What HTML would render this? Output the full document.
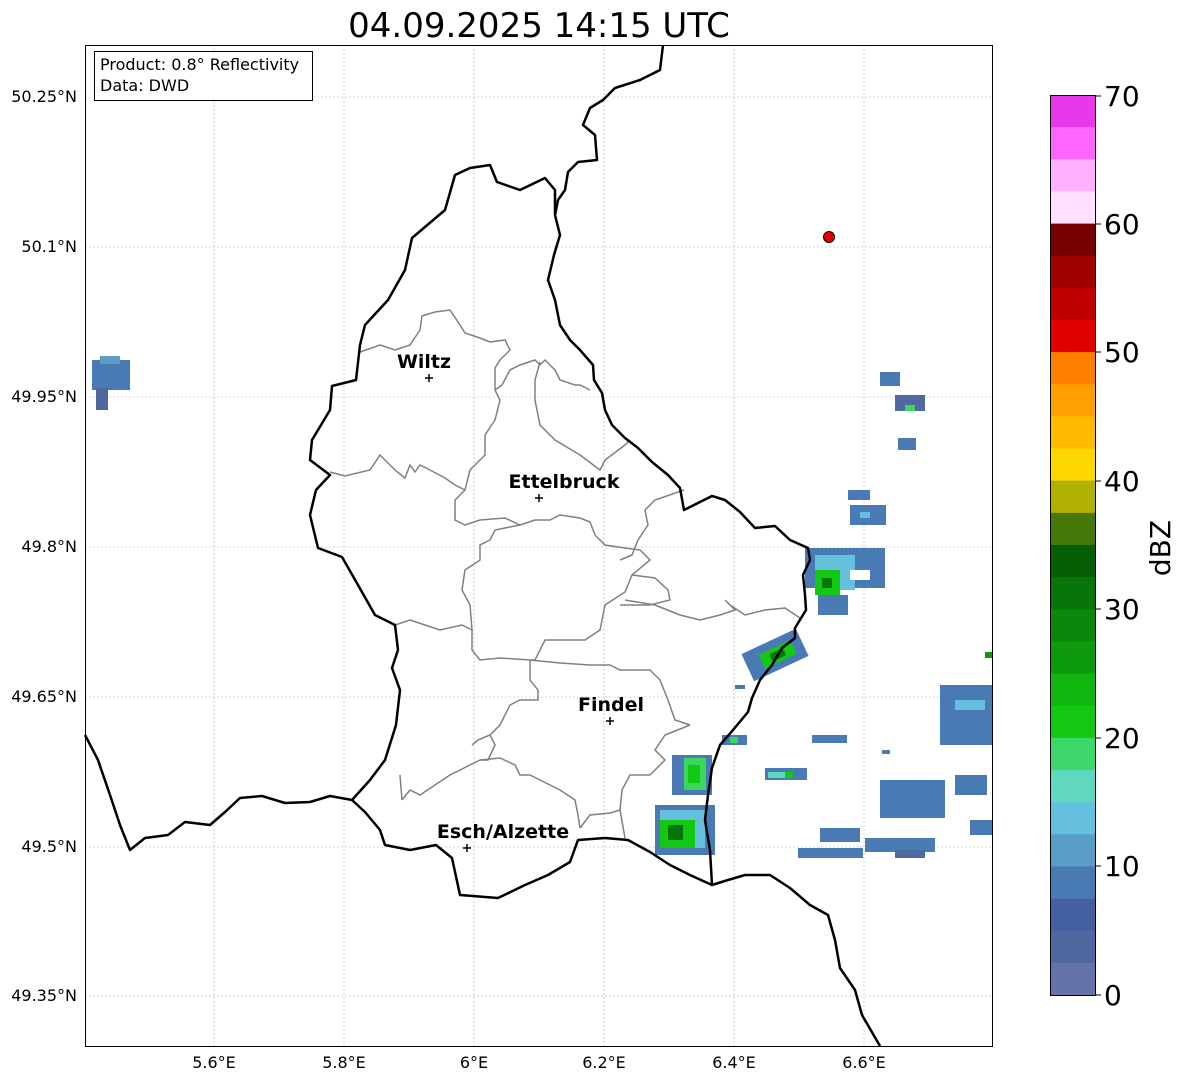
<!DOCTYPE html>
<html><head><meta charset="utf-8"><style>
html,body{margin:0;padding:0;background:#fff;}
svg{display:block;font-family:"DejaVu Sans","Liberation Sans",sans-serif;}
</style></head><body>
<svg width="1184" height="1081" viewBox="0 0 1184 1081" xmlns="http://www.w3.org/2000/svg">
<rect width="1184" height="1081" fill="#fff"/>
<text x="539" y="37" font-size="34" text-anchor="middle" fill="#000">04.09.2025 14:15 UTC</text>
<!-- grid -->
<g stroke="#b0b0b0" stroke-width="0.6" stroke-dasharray="2,2">
<line x1="214" y1="45" x2="214" y2="1046"/><line x1="344" y1="45" x2="344" y2="1046"/><line x1="474" y1="45" x2="474" y2="1046"/><line x1="604" y1="45" x2="604" y2="1046"/><line x1="734" y1="45" x2="734" y2="1046"/><line x1="864" y1="45" x2="864" y2="1046"/>
<line x1="85" y1="97" x2="992" y2="97"/><line x1="85" y1="247" x2="992" y2="247"/><line x1="85" y1="397" x2="992" y2="397"/><line x1="85" y1="547" x2="992" y2="547"/><line x1="85" y1="697" x2="992" y2="697"/><line x1="85" y1="847" x2="992" y2="847"/><line x1="85" y1="996" x2="992" y2="996"/>
</g>
<!-- radar echoes -->
<g>
<rect x="92" y="360" width="38" height="30" fill="#4a7ab4"/><rect x="96" y="388" width="12" height="22" fill="#5068a0"/><rect x="100" y="356" width="20" height="8" fill="#5a9ec8"/>
<rect x="880" y="372" width="20" height="14" fill="#4a7ab4"/><rect x="895" y="395" width="30" height="16" fill="#5068a0"/><rect x="905" y="405" width="10" height="6" fill="#3cd65e"/><rect x="898" y="438" width="18" height="12" fill="#4a7ab4"/>
<rect x="848" y="490" width="22" height="10" fill="#4a7ab4"/><rect x="850" y="505" width="36" height="20" fill="#4a7ab4"/><rect x="860" y="512" width="10" height="6" fill="#64c0dc"/>
<rect x="805" y="548" width="80" height="40" fill="#4a7ab4"/><rect x="815" y="555" width="40" height="35" fill="#64c0dc"/><rect x="815" y="570" width="25" height="25" fill="#12c812"/><rect x="822" y="578" width="10" height="10" fill="#087508"/><rect x="818" y="595" width="30" height="20" fill="#4a7ab4"/><rect x="850" y="570" width="20" height="10" fill="#fff"/>
<rect x="745" y="640" width="60" height="30" fill="#4a7ab4" transform="rotate(-25 775 655)"/><rect x="760" y="648" width="35" height="15" fill="#12c812" transform="rotate(-25 775 655)"/><rect x="770" y="652" width="15" height="8" fill="#087508" transform="rotate(-25 775 655)"/>
<rect x="722" y="735" width="25" height="10" fill="#4a7ab4"/><rect x="730" y="737" width="8" height="6" fill="#3cd65e"/>
<rect x="672" y="755" width="40" height="40" fill="#4a7ab4"/><rect x="684" y="758" width="22" height="32" fill="#3cd65e"/><rect x="688" y="765" width="12" height="18" fill="#12c812"/>
<rect x="655" y="805" width="60" height="50" fill="#4a7ab4"/><rect x="660" y="810" width="45" height="38" fill="#64c0dc"/><rect x="660" y="820" width="35" height="28" fill="#12c812"/><rect x="668" y="825" width="15" height="15" fill="#087508"/>
<rect x="765" y="768" width="42" height="12" fill="#4a7ab4"/><rect x="768" y="772" width="20" height="6" fill="#60d8c0"/><rect x="785" y="772" width="8" height="6" fill="#12c812"/>
<rect x="812" y="735" width="35" height="8" fill="#4a7ab4"/>
<rect x="940" y="685" width="52" height="60" fill="#4a7ab4"/><rect x="955" y="700" width="30" height="10" fill="#64c0dc"/><rect x="985" y="652" width="7" height="6" fill="#0d9b0d"/>
<rect x="880" y="780" width="65" height="38" fill="#4a7ab4"/><rect x="955" y="775" width="32" height="20" fill="#4a7ab4"/><rect x="970" y="820" width="22" height="15" fill="#4a7ab4"/>
<rect x="820" y="828" width="40" height="14" fill="#4a7ab4"/><rect x="798" y="848" width="65" height="10" fill="#4a7ab4"/><rect x="865" y="838" width="70" height="14" fill="#4a7ab4"/><rect x="895" y="850" width="30" height="8" fill="#5068a0"/>
<rect x="882" y="750" width="8" height="4" fill="#4a7ab4"/><rect x="735" y="685" width="10" height="4" fill="#4a7ab4"/>
</g>
<!-- internal boundaries -->
<g fill="none" stroke="#808080" stroke-width="1.5">
<path d="M330 472 L345 476 L370 470 L380 455 L395 470 L405 478 L410 465 L415 472 L420 465 L430 470 L445 478 L455 485 L465 490"/>
<path d="M360 352 L380 345 L395 350 L410 345 L420 330 L422 316 L435 312 L450 310 L460 325 L465 333 L480 338 L490 342 L505 340 L510 350 L500 360 L495 368 L495 390"/>
<path d="M495 390 L502 385 L510 370 L520 365 L535 360 L540 365 L545 360 L555 370 L560 380 L575 385 L580 385 L590 390"/>
<path d="M495 390 L500 400 L495 420 L485 435 L485 455 L470 470 L465 490 L455 500 L455 510 L455 520 L465 525 L480 520 L505 518 L520 525"/>
<path d="M540 362 L535 380 L535 400 L540 425 L555 440 L580 455 L600 470 L605 460 L625 445 L630 440"/>
<path d="M520 525 L495 530 L490 540 L480 545 L480 560 L465 570 L462 590 L470 605 L472 630 L472 650 L480 660 L500 658 L530 660"/>
<path d="M520 525 L535 520 L550 520 L560 515 L580 518 L590 522 L595 535 L605 545 L625 548 L640 550 L650 560 L632 575 L625 592 L605 605 L600 630 L585 640 L565 640 L545 640 L535 660 L530 660"/>
<path d="M684 490 L655 500 L645 510 L648 525 L638 540 L632 555 L620 560"/>
<path d="M632 575 L655 578 L668 590 L670 600 L650 605 L620 605"/>
<path d="M530 660 L560 663 L590 665 L610 665 L620 670 L650 670 L660 680 L668 700 L675 720 L690 725"/>
<path d="M530 660 L530 680 L538 690 L538 700 L520 700 L510 705 L500 725 L490 735 L478 740 L472 745"/>
<path d="M402 800 L410 790 L420 795 L435 785 L450 775 L470 765 L480 760 L488 760 L495 745 L490 735"/>
<path d="M400 775 L402 800 M480 760 L500 758 L515 765 L520 775 L530 775 L540 780 L560 790 L575 800 L578 815 L580 828"/>
<path d="M690 725 L665 735 L655 750 L665 760 L650 775 L630 775 L622 790 L620 810 L610 813 L590 815 L580 828 M620 810 L625 838"/>
<path d="M625 600 L655 605 L680 615 L700 620 L720 615 L735 610 L725 600 L730 605 L745 615 L765 610 L785 608 L800 618"/>
<path d="M395 625 L410 620 L425 625 L440 630 L462 625 L472 630"/>
</g>
<!-- national borders -->
<g fill="none" stroke="#000" stroke-width="2.5" stroke-linejoin="round">
<path d="M663 45 L660 70 L640 80 L615 88 L603 100 L590 108 L583 125 L595 135 L597 160 L578 162 L568 172 L565 190 L558 200 L555 215 L560 235 L554 255 L548 280 L555 300 L560 325 L570 340 L580 350 L593 365 L594 380 L602 393 L605 410 L612 425 L625 438 L638 448 L652 462 L668 475 L680 488 L684 510 L700 502 L712 496 L725 500 L740 512 L755 528 L775 526 L790 540 L808 548 L810 560 L803 575 L805 595 L806 610 L795 628 L795 638 L782 648 L772 665 L760 680 L752 698 L748 712 L733 730 L720 745 L712 768 L708 795 L705 820 L710 850 L712 885 L728 880 L745 875 L770 875 L790 888 L810 905 L828 915 L835 940 L840 968 L855 990 L862 1015 L880 1046"/>
<path d="M555 215 L555 190 L545 178 L520 190 L497 182 L490 165 L470 168 L455 175 L445 210 L412 238 L405 270 L388 300 L365 325 L360 345 L356 380 L332 386 L330 410 L312 440 L310 460 L330 475 L316 490 L310 515 L318 548 L342 557 L358 585 L375 615 L395 625 L398 650 L392 668 L400 690 L396 725 L385 760 L370 780 L352 800 L330 796 L310 802 L285 803 L262 796 L240 798 L225 812 L210 825 L185 822 L168 835 L145 838 L130 850 L120 825 L110 795 L98 760 L85 735"/>
<path d="M352 800 L365 812 L380 830 L385 845 L410 850 L436 845 L452 858 L460 895 L498 898 L525 885 L548 875 L570 862 L578 840 L605 838 L628 840 L650 852 L670 865 L690 875 L712 885"/>
</g>
<!-- cities -->
<g font-weight="bold" font-size="19" text-anchor="middle" fill="#000">
<text x="424" y="368">Wiltz</text><text x="564" y="488">Ettelbruck</text><text x="611" y="711">Findel</text><text x="503" y="838">Esch/Alzette</text>
</g>
<g stroke="#000" stroke-width="1.5">
<path d="M425 378h8M429 374v8"/><path d="M535 498h8M539 494v8"/><path d="M606 721h8M610 717v8"/><path d="M463 848h8M467 844v8"/>
</g>
<circle cx="829" cy="237" r="5.5" fill="#e00000" stroke="#000" stroke-width="1"/>
<!-- frame -->
<rect x="85.5" y="45.5" width="907" height="1001" fill="none" stroke="#000" stroke-width="1"/>
<rect x="94.5" y="51.5" width="218" height="49" fill="#fff" stroke="#000" stroke-width="1"/>
<text x="100" y="70" font-size="16">Product: 0.8° Reflectivity</text>
<text x="100" y="91" font-size="16">Data: DWD</text>
<!-- axis labels -->
<g font-size="16" text-anchor="end">
<text x="77" y="102">50.25°N</text><text x="77" y="252">50.1°N</text><text x="77" y="402">49.95°N</text><text x="77" y="552">49.8°N</text><text x="77" y="702">49.65°N</text><text x="77" y="852">49.5°N</text><text x="77" y="1001">49.35°N</text>
</g>
<g font-size="16" text-anchor="middle">
<text x="214" y="1068">5.6°E</text><text x="344" y="1068">5.8°E</text><text x="474" y="1068">6°E</text><text x="604" y="1068">6.2°E</text><text x="734" y="1068">6.4°E</text><text x="864" y="1068">6.6°E</text>
</g>
<!-- colorbar -->
<g>
<rect x="1050" y="95" width="46" height="33" fill="#e838ec"/>
<rect x="1050" y="127.1" width="46" height="33" fill="#ff66ff"/>
<rect x="1050" y="159.3" width="46" height="33" fill="#ffb0ff"/>
<rect x="1050" y="191.4" width="46" height="33" fill="#ffe0ff"/>
<rect x="1050" y="223.6" width="46" height="33" fill="#780000"/>
<rect x="1050" y="255.7" width="46" height="33" fill="#a00000"/>
<rect x="1050" y="287.9" width="46" height="33" fill="#c00000"/>
<rect x="1050" y="320" width="46" height="33" fill="#e00000"/>
<rect x="1050" y="352.1" width="46" height="33" fill="#ff7f00"/>
<rect x="1050" y="384.3" width="46" height="33" fill="#ff9f00"/>
<rect x="1050" y="416.4" width="46" height="33" fill="#ffbb00"/>
<rect x="1050" y="448.6" width="46" height="33" fill="#ffd700"/>
<rect x="1050" y="480.7" width="46" height="33" fill="#b0b000"/>
<rect x="1050" y="512.9" width="46" height="33" fill="#457a0a"/>
<rect x="1050" y="545" width="46" height="33" fill="#065e06"/>
<rect x="1050" y="577.1" width="46" height="33" fill="#087508"/>
<rect x="1050" y="609.3" width="46" height="33" fill="#0b880b"/>
<rect x="1050" y="641.4" width="46" height="33" fill="#0d9b0d"/>
<rect x="1050" y="673.6" width="46" height="33" fill="#10b510"/>
<rect x="1050" y="705.7" width="46" height="33" fill="#12c812"/>
<rect x="1050" y="737.9" width="46" height="33" fill="#3cd66a"/>
<rect x="1050" y="770" width="46" height="33" fill="#60d8c0"/>
<rect x="1050" y="802.1" width="46" height="33" fill="#64c0dc"/>
<rect x="1050" y="834.3" width="46" height="33" fill="#5a9ec8"/>
<rect x="1050" y="866.4" width="46" height="33" fill="#4a7ab4"/>
<rect x="1050" y="898.6" width="46" height="33" fill="#4460a0"/>
<rect x="1050" y="930.7" width="46" height="33" fill="#5068a0"/>
<rect x="1050" y="962.9" width="46" height="33.1" fill="#6474a8"/>
<rect x="1050.5" y="95.5" width="45" height="900" fill="none" stroke="#000" stroke-width="1"/>
</g>
<g stroke="#000" stroke-width="1">
<line x1="1096" y1="96" x2="1101" y2="96"/><line x1="1096" y1="224" x2="1101" y2="224"/><line x1="1096" y1="352" x2="1101" y2="352"/><line x1="1096" y1="481" x2="1101" y2="481"/><line x1="1096" y1="609" x2="1101" y2="609"/><line x1="1096" y1="738" x2="1101" y2="738"/><line x1="1096" y1="866" x2="1101" y2="866"/><line x1="1096" y1="995" x2="1101" y2="995"/>
</g>
<g font-size="28" fill="#000">
<text x="1104" y="106">70</text><text x="1104" y="234">60</text><text x="1104" y="362">50</text><text x="1104" y="491">40</text><text x="1104" y="619">30</text><text x="1104" y="748">20</text><text x="1104" y="876">10</text><text x="1104" y="1005">0</text>
</g>
<text x="1170" y="548" font-size="28" text-anchor="middle" transform="rotate(-90 1170 548)">dBZ</text>
</svg>
</body></html>
